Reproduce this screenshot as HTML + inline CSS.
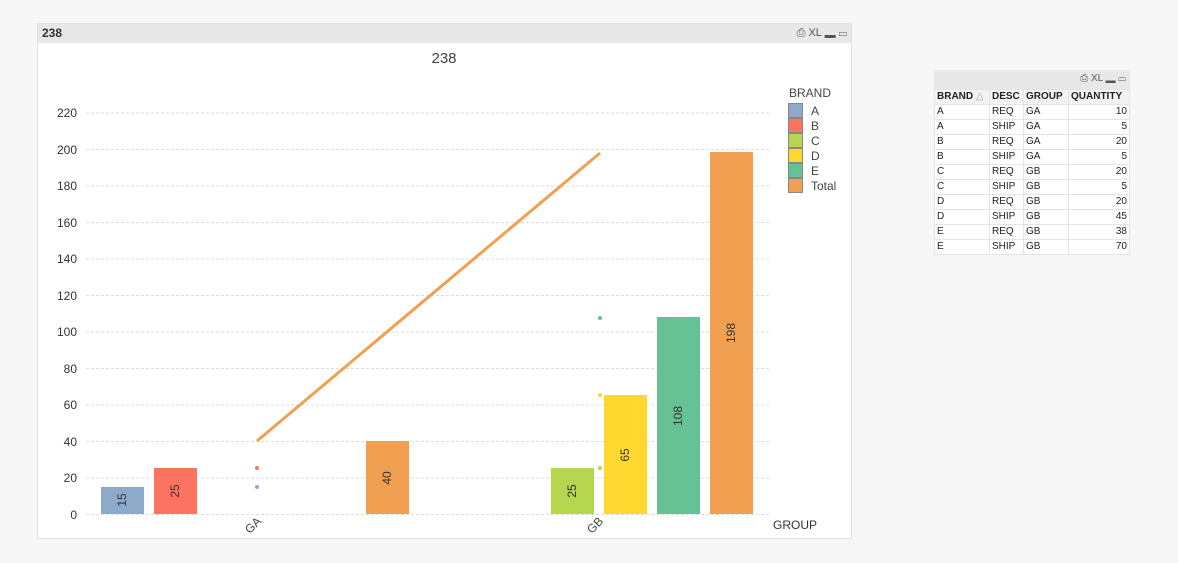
<!DOCTYPE html>
<html><head><meta charset="utf-8"><style>
body{margin:0;width:1178px;height:563px;background:#f7f7f7;font-family:"Liberation Sans",sans-serif;position:relative;overflow:hidden}
.panel{position:absolute;left:37px;top:23px;width:813px;height:514px;background:#fff;border:1px solid #e0e0e0}
.hdr{position:absolute;left:0;top:0;width:100%;height:19px;background:#e8e8e8;font-size:12px;font-weight:bold;color:#333;line-height:19px}
table{border-collapse:collapse;font-size:10px;color:#222}
td{border:1px solid #e4e4e4;height:14px;padding:0 2px;line-height:14px}
</style></head><body>
<div class="panel">
<div class="hdr"><span style="padding-left:4px">238</span><span style="position:absolute;right:4px;top:0;font-weight:normal;font-size:11px;color:#555">⎙ XL ▂ ▭</span></div>
</div>
<svg width="1178" height="563" style="position:absolute;left:0;top:0" font-family="Liberation Sans, sans-serif">
<text x="444" y="63" font-size="15" fill="#444" text-anchor="middle">238</text>
<g stroke="#ddd" stroke-dasharray="3,2" stroke-width="1">
<line x1="86" x2="770" y1="514.5" y2="514.5"/><line x1="86" x2="770" y1="478" y2="478"/><line x1="86" x2="770" y1="441.5" y2="441.5"/><line x1="86" x2="770" y1="405" y2="405"/><line x1="86" x2="770" y1="368.5" y2="368.5"/><line x1="86" x2="770" y1="332" y2="332"/><line x1="86" x2="770" y1="295.5" y2="295.5"/><line x1="86" x2="770" y1="259" y2="259"/><line x1="86" x2="770" y1="222.5" y2="222.5"/><line x1="86" x2="770" y1="186" y2="186"/><line x1="86" x2="770" y1="149.5" y2="149.5"/><line x1="86" x2="770" y1="113" y2="113"/>
</g>
<g font-size="12" fill="#333" text-anchor="end">
<text x="77" y="519">0</text><text x="77" y="482">20</text><text x="77" y="446">40</text><text x="77" y="409">60</text><text x="77" y="373">80</text><text x="77" y="336">100</text><text x="77" y="300">120</text><text x="77" y="263">140</text><text x="77" y="227">160</text><text x="77" y="190">180</text><text x="77" y="154">200</text><text x="77" y="117">220</text>
</g>
<rect x="101" y="487" width="43" height="27" fill="#8eaacb"/>
<rect x="154" y="468" width="43" height="46" fill="#fc7362"/>
<rect x="366" y="441" width="43" height="73" fill="#f0a050"/>
<rect x="551" y="468" width="43" height="46" fill="#b6d650"/>
<rect x="604" y="395" width="43" height="119" fill="#fed82f"/>
<rect x="657" y="317" width="43" height="197" fill="#66c195"/>
<rect x="710" y="152" width="43" height="362" fill="#f0a050"/>
<g font-size="12" fill="#333" text-anchor="middle">
<text transform="translate(126,500) rotate(-90)">15</text>
<text transform="translate(179,491) rotate(-90)">25</text>
<text transform="translate(391,478) rotate(-90)">40</text>
<text transform="translate(576,491) rotate(-90)">25</text>
<text transform="translate(629,455) rotate(-90)">65</text>
<text transform="translate(682,416) rotate(-90)">108</text>
<text transform="translate(735,333) rotate(-90)">198</text>
</g>
<line x1="257" y1="441" x2="600" y2="153" stroke="#f0a050" stroke-width="3"/>
<circle cx="257" cy="468" r="2" fill="#fc7362"/><circle cx="257" cy="487" r="2" fill="#8eaacb"/>
<circle cx="600" cy="318" r="2" fill="#66c195"/><circle cx="600" cy="395" r="2" fill="#fed82f"/><circle cx="600" cy="468" r="2" fill="#b6d650"/>
<g font-size="12" fill="#444" text-anchor="end">
<text transform="translate(262,522) rotate(-45)">GA</text>
<text transform="translate(604,522) rotate(-45)">GB</text>
</g>
<text x="773" y="529" font-size="12" fill="#333">GROUP</text>
<text x="789" y="97" font-size="12" fill="#444">BRAND</text>
<g stroke="#888" stroke-width="1">
<rect x="788.5" y="103.5" width="14" height="14" fill="#8eaacb"/>
<rect x="788.5" y="118.5" width="14" height="14" fill="#fc7362"/>
<rect x="788.5" y="133.5" width="14" height="14" fill="#b6d650"/>
<rect x="788.5" y="148.5" width="14" height="14" fill="#fed82f"/>
<rect x="788.5" y="163.5" width="14" height="14" fill="#66c195"/>
<rect x="788.5" y="178.5" width="14" height="14" fill="#f0a050"/>
</g>
<g font-size="12" fill="#444">
<text x="811" y="115">A</text><text x="811" y="130">B</text><text x="811" y="145">C</text><text x="811" y="160">D</text><text x="811" y="175">E</text><text x="811" y="190">Total</text>
</g>
</svg>
<div style="position:absolute;left:934px;top:70px;width:196px;height:19px;background:#e8e8e8;font-size:10px;color:#555;text-align:right;line-height:18px"><span style="padding-right:4px">⎙ XL ▂ ▭</span></div>
<table style="position:absolute;left:934px;top:89px;width:196px;background:#fff">
<tr style="font-weight:bold;background:#f3f3f3"><td style="width:50px">BRAND <span style="color:#aaa;font-weight:normal">△</span></td><td style="width:29px">DESC</td><td style="width:40px">GROUP</td><td>QUANTITY</td></tr>
<tr><td>A</td><td>REQ</td><td>GA</td><td align="right">10</td></tr>
<tr><td>A</td><td>SHIP</td><td>GA</td><td align="right">5</td></tr>
<tr><td>B</td><td>REQ</td><td>GA</td><td align="right">20</td></tr>
<tr><td>B</td><td>SHIP</td><td>GA</td><td align="right">5</td></tr>
<tr><td>C</td><td>REQ</td><td>GB</td><td align="right">20</td></tr>
<tr><td>C</td><td>SHIP</td><td>GB</td><td align="right">5</td></tr>
<tr><td>D</td><td>REQ</td><td>GB</td><td align="right">20</td></tr>
<tr><td>D</td><td>SHIP</td><td>GB</td><td align="right">45</td></tr>
<tr><td>E</td><td>REQ</td><td>GB</td><td align="right">38</td></tr>
<tr><td>E</td><td>SHIP</td><td>GB</td><td align="right">70</td></tr>
</table>
</body></html>
